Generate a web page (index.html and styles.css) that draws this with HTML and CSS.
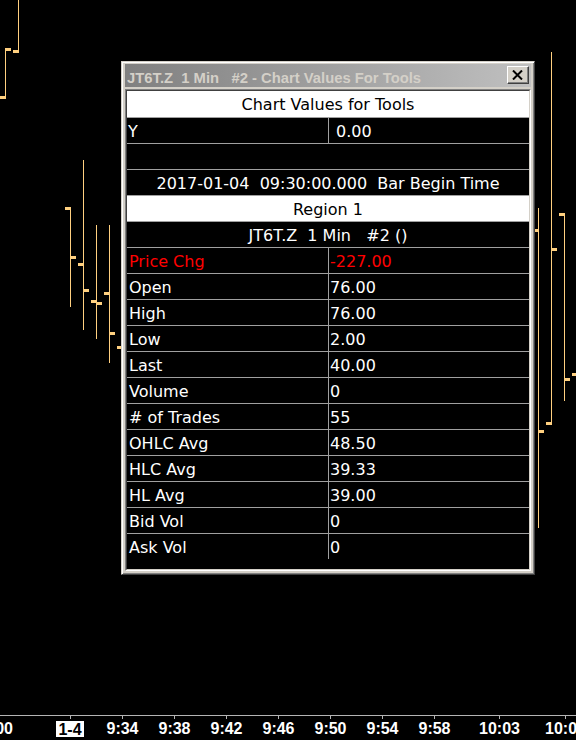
FILE: index.html
```html
<!DOCTYPE html>
<html>
<head>
<meta charset="utf-8">
<title>Chart Values For Tools</title>
<link rel="stylesheet" href="styles.css">
</head>
<body>
<div class="screen">
  <svg class="chart" width="576" height="740" viewBox="0 0 576 740">
    <g class="bars">
      <rect x="18" y="0" width="1" height="53"/><rect x="13" y="50" width="5" height="3"/>
      <rect x="5" y="48" width="1" height="51"/><rect x="6" y="48" width="5" height="3"/><rect x="0" y="96" width="5" height="3"/>
      <rect x="70" y="207" width="1" height="100"/><rect x="65" y="207" width="5" height="3"/><rect x="71" y="256" width="5" height="3"/>
      <rect x="83" y="160" width="1" height="170"/><rect x="78" y="263" width="5" height="3"/><rect x="84" y="289" width="5" height="3"/>
      <rect x="96" y="225" width="1" height="114"/><rect x="91" y="300" width="5" height="3"/><rect x="97" y="302" width="5" height="3"/>
      <rect x="109" y="225" width="1" height="138"/><rect x="104" y="292" width="5" height="3"/><rect x="110" y="332" width="5" height="3"/>
      <rect x="117" y="346" width="5" height="3"/>
      <rect x="538" y="208" width="1" height="320"/><rect x="533" y="229" width="5" height="3"/><rect x="539" y="430" width="5" height="3"/>
      <rect x="551" y="52" width="1" height="373"/><rect x="546" y="422" width="5" height="3"/><rect x="552" y="248" width="5" height="3"/>
      <rect x="564" y="213" width="1" height="188"/><rect x="559" y="213" width="5" height="3"/><rect x="565" y="378" width="5" height="3"/>
      <rect x="572" y="373" width="4" height="3"/>
    </g>
    <g class="axis">
      <rect class="axis-line" x="0" y="715" width="576" height="1"/>
      <rect class="tick" x="70" y="715" width="1" height="4"/>
      <rect class="tick" x="122" y="715" width="1" height="4"/>
      <rect class="tick" x="174" y="715" width="1" height="4"/>
      <rect class="tick" x="226" y="715" width="1" height="4"/>
      <rect class="tick" x="278" y="715" width="1" height="4"/>
      <rect class="tick" x="330" y="715" width="1" height="4"/>
      <rect class="tick" x="382" y="715" width="1" height="4"/>
      <rect class="tick" x="434" y="715" width="1" height="4"/>
      <rect class="tick" x="499" y="715" width="1" height="4"/>
      <rect class="tick" x="565" y="715" width="1" height="4"/>
      <rect class="date-box" x="56" y="721" width="28" height="16"/>
      <text class="label end" x="13" y="734">16:00</text>
      <text class="label date" x="70" y="735">1-4</text>
      <text class="label" x="122.5" y="734">9:34</text>
      <text class="label" x="174.5" y="734">9:38</text>
      <text class="label" x="226.5" y="734">9:42</text>
      <text class="label" x="278.5" y="734">9:46</text>
      <text class="label" x="330.5" y="734">9:50</text>
      <text class="label" x="382.5" y="734">9:54</text>
      <text class="label" x="434.5" y="734">9:58</text>
      <text class="label" x="499.5" y="734">10:03</text>
      <text class="label" x="565.5" y="734">10:08</text>
    </g>
  </svg>

  <div class="win">
    <div class="titlebar">
      <span class="title">JT6T.Z  1 Min   #2 - Chart Values For Tools</span>
      <div class="close">
        <svg width="11" height="10" viewBox="0 0 11 10"><path d="M1 0.5 L10 9.5 M10 0.5 L1 9.5" stroke="#000" stroke-width="2" fill="none"/></svg>
      </div>
    </div>
    <div class="client">
      <div class="grid">
        <div class="row head">Chart Values for Tools</div>
        <div class="row pair"><div class="k ky">Y</div><div class="v vy">0.00</div></div>
        <div class="row"></div>
        <div class="row center">2017-01-04  09:30:00.000  Bar Begin Time</div>
        <div class="row head">Region 1</div>
        <div class="row center">JT6T.Z  1 Min   #2 ()</div>
        <div class="row pair red"><div class="k">Price Chg</div><div class="v">-227.00</div></div>
        <div class="row pair"><div class="k">Open</div><div class="v">76.00</div></div>
        <div class="row pair"><div class="k">High</div><div class="v">76.00</div></div>
        <div class="row pair"><div class="k">Low</div><div class="v">2.00</div></div>
        <div class="row pair"><div class="k">Last</div><div class="v">40.00</div></div>
        <div class="row pair"><div class="k">Volume</div><div class="v">0</div></div>
        <div class="row pair"><div class="k"># of Trades</div><div class="v">55</div></div>
        <div class="row pair"><div class="k">OHLC Avg</div><div class="v">48.50</div></div>
        <div class="row pair"><div class="k">HLC Avg</div><div class="v">39.33</div></div>
        <div class="row pair"><div class="k">HL Avg</div><div class="v">39.00</div></div>
        <div class="row pair"><div class="k">Bid Vol</div><div class="v">0</div></div>
        <div class="row pair"><div class="k">Ask Vol</div><div class="v">0</div></div>
      </div>
    </div>
  </div>
</div>
</body>
</html>
```

FILE: styles.css
```css
html, body {
  margin: 0;
  padding: 0;
  background: #000;
}

.screen {
  position: relative;
  width: 576px;
  height: 740px;
  overflow: hidden;
  background: #000;
}

.chart {
  position: absolute;
  left: 0;
  top: 0;
  display: block;
}

.bars rect {
  fill: #ffd080;
}

.axis-line,
.tick {
  fill: #b4b4b4;
}

.date-box {
  fill: #fff;
}

.label {
  font-family: "Liberation Sans", Arial, sans-serif;
  font-weight: bold;
  font-size: 16px;
  fill: #fff;
  text-anchor: middle;
}

.label.end {
  text-anchor: end;
}

.label.date {
  fill: #000;
}

/* dialog window */
.win {
  position: absolute;
  left: 121px;
  top: 61px;
  width: 414px;
  height: 514px;
  box-sizing: border-box;
  background: #d4d0c8;
  border: 1px solid;
  border-color: #d4d0c8 #404040 #404040 #d4d0c8;
  box-shadow: inset 1px 1px #fff, inset -1px -1px #808080;
  padding: 2px 3px 3px 3px;
  display: flex;
  flex-direction: column;
}

.titlebar {
  height: 23px;
  flex: none;
  display: flex;
  align-items: flex-start;
  background: linear-gradient(to right, #808080, #c0c0c0);
  margin-bottom: 2px;
}

.title {
  font-family: "Liberation Sans", Arial, sans-serif;
  font-weight: bold;
  font-size: 14.8px;
  line-height: 14px;
  color: #d4d0c8;
  white-space: pre;
  padding: 7px 0 0 2px;
}

.close {
  margin: 2px 2px 0 auto;
  width: 22px;
  height: 18px;
  box-sizing: border-box;
  background: #d4d0c8;
  border: 1px solid;
  border-color: #fff #404040 #404040 #fff;
  box-shadow: inset -1px -1px #808080;
  display: flex;
  align-items: center;
  justify-content: center;
}

.close svg {
  display: block;
  margin: 0 1px 1px 0;
}

.client {
  flex: 1;
  border: 1px solid;
  border-color: #808080 #fff #fff #808080;
  display: flex;
}

.grid {
  flex: 1;
  border: 1px solid;
  border-color: #404040 #d4d0c8 #d4d0c8 #404040;
  background: #000;
  font-family: "DejaVu Sans", Verdana, sans-serif;
  font-size: 16px;
  color: #fff;
}

.row {
  height: 25px;
  line-height: 27px;
  border-top: 1px solid #a0a0a0;
  white-space: pre;
  overflow: hidden;
}

.row:first-child {
  border-top: 0;
  height: 26px;
  line-height: 28px;
}

.row.head {
  background: #fff;
  color: #000;
  text-align: center;
}

.row.center {
  text-align: center;
}

.row.pair {
  display: flex;
}

.k {
  flex: none;
  width: 202px;
  box-sizing: border-box;
  border-right: 1px solid #a0a0a0;
  padding-left: 2px;
}

.k.ky {
  padding-left: 1px;
}

.v {
  padding-left: 1px;
}

.v.vy {
  padding-left: 7px;
}

.red {
  color: #ff0000;
}
```
